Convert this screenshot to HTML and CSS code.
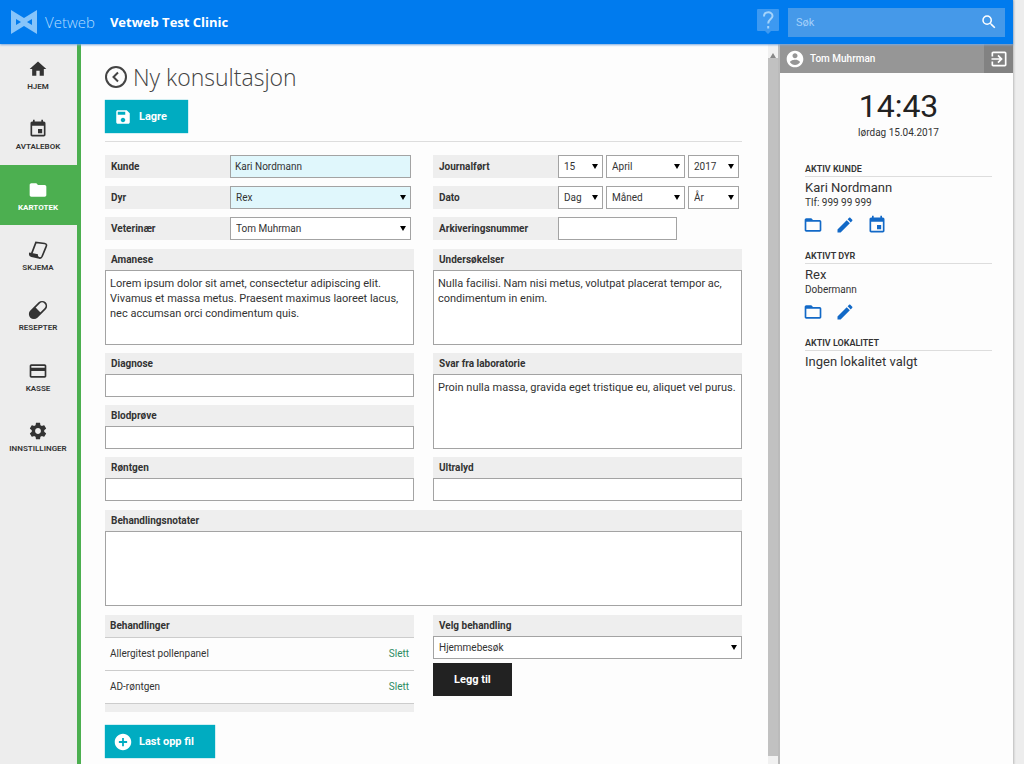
FILE: index.html
```html
<!DOCTYPE html>
<html lang="no">
<head>
<meta charset="utf-8">
<meta name="viewport" content="width=device-width, initial-scale=1">
<title>Vetweb – Ny konsultasjon</title>
<link rel="stylesheet" href="styles.css">
</head>
<body>
<svg class="sprite" aria-hidden="true">
  <symbol id="calendar" viewBox="0 0 24 24"><path d="M17 12h-5v5h5v-5zM16 1v2H8V1H6v2H5c-1.100 0-2 .9-2 2v14c0 1.100.9 2 2 2h14c1.100 0 2-.9 2-2V5c0-1.100-.9-2-2-2h-1V1h-2zm3 18H5V8h14v11z"/></symbol>
  <symbol id="folder-open" viewBox="0 0 24 24"><path d="M20 6h-8l-2-2H4c-1.100 0-2 .9-2 2v12c0 1.100.9 2 2 2h16c1.100 0 2-.9 2-2V8c0-1.100-.9-2-2-2zm0 12H4V8h16v10z"/></symbol>
  <symbol id="pencil" viewBox="0 0 24 24"><path d="M3 17.250V21h3.750L17.810 9.940l-3.750-3.750L3 17.250zM20.710 7.040c.39-.39.39-1.020 0-1.410l-2.340-2.340c-.39-.39-1.020-.39-1.410 0l-1.830 1.830 3.750 3.750 1.830-1.830z"/></symbol>
</svg>
<div class="app">
  <header class="topbar">
    <a class="brand" href="#">
      <svg class="brand-mark" viewBox="0 0 26 24" aria-hidden="true"><path fill-rule="evenodd" d="M0 0 13 8 26 0V24L13 16 0 24ZM5 9V15L10 12ZM21 9V15L16 12Z"/></svg>
      <span class="brand-name">Vetweb</span>
    </a>
    <strong class="clinic">Vetweb Test Clinic</strong>
    <button class="help" type="button" aria-label="Hjelp">
      <svg viewBox="0 0 22 26" aria-hidden="true"><path class="help-box" d="M1 0H21Q22 0 22 1V21Q22 22 21 22H14L11 25 8 22H1Q0 22 0 21V1Q0 0 1 0Z"/><path class="help-line" d="M7 7.500C7 2 15.500 2 15.500 7C15.500 10 11.200 10 11.200 14.500M11.200 17V19.500"/></svg>
    </button>
    <form class="search" role="search">
      <input type="search" placeholder="Søk" aria-label="Søk">
      <button type="button" aria-label="Søk"><svg viewBox="0 0 24 24" aria-hidden="true"><path d="M15.500 14h-.79l-.28-.27A6.470 6.470 0 0 0 16 9.500 6.500 6.500 0 1 0 9.500 16c1.610 0 3.090-.59 4.230-1.570l.27.28v.79l5 4.990L20.490 19l-4.990-5zm-6 0C7.010 14 5 11.990 5 9.500S7.010 5 9.500 5 14 7.010 14 9.500 11.990 14 9.500 14z"/></svg></button>
    </form>
  </header>
  <div class="body">
    <nav class="nav">
      <div class="nav-items">
      <a href="#"><svg viewBox="0 0 24 24"><path d="M10 20v-6h4v6h5v-8h3L12 3 2 12h3v8z"/></svg>HJEM</a>
      <a href="#"><svg viewBox="0 0 24 24"><use href="#calendar"/></svg>AVTALEBOK</a>
      <a class="active" href="#" aria-current="page"><svg viewBox="0 0 24 24"><path d="M10 4H4c-1.100 0-2 .9-2 2v12c0 1.100.9 2 2 2h16c1.100 0 2-.9 2-2V8c0-1.100-.9-2-2-2h-8l-2-2z"/></svg>KARTOTEK</a>
      <a href="#"><svg viewBox="0 0 24 24"><path class="line" d="M4.500 16 9.500 3 20 4.200C22.800 4.600 22.500 6.500 21.500 8.500L17 19.500C16.200 21.300 15 22 13.500 21.500"/><path d="M1.500 15 12 17C11.500 19 12.500 20.500 14.500 20.500L13.500 22.500 4 20.500C1.500 19.800 0.500 17.500 1.500 15Z"/></svg>SKJEMA</a>
      <a href="#"><svg viewBox="0 0 24 24"><g transform="rotate(-45 12 12)"><rect class="line" x="0" y="7" width="24" height="10" rx="5"/><path d="M0 12a5 5 0 0 1 5-5h7v10H5a5 5 0 0 1-5-5Z"/></g></svg>RESEPTER</a>
      <a href="#"><svg viewBox="0 0 24 24"><path d="M20 4H4c-1.110 0-1.990.89-1.990 2L2 18c0 1.110.89 2 2 2h16c1.110 0 2-.89 2-2V6c0-1.110-.89-2-2-2zm0 14H4v-6h16v6zm0-10H4V6h16v2z"/></svg>KASSE</a>
      <a href="#"><svg viewBox="0 0 24 24"><path d="M19.430 12.980c.04-.32.07-.64.07-.98s-.03-.66-.07-.98l2.110-1.650c.19-.15.24-.42.12-.64l-2-3.460c-.12-.22-.39-.3-.61-.22l-2.490 1c-.52-.4-1.080-.73-1.690-.98l-.38-2.650C14.460 2.180 14.250 2 14 2h-4c-.25 0-.46.18-.49.42l-.38 2.650c-.61.25-1.170.59-1.690.98l-2.490-1c-.23-.09-.49 0-.61.22l-2 3.460c-.13.22-.07.49.12.64l2.110 1.650c-.04.32-.07.65-.07.98s.03.66.07.98l-2.110 1.650c-.19.15-.24.42-.12.64l2 3.460c.12.22.39.3.61.22l2.490-1c.52.4 1.080.73 1.690.98l.38 2.650c.03.24.24.42.49.42h4c.25 0 .46-.18.49-.42l.38-2.650c.61-.25 1.170-.59 1.690-.98l2.490 1c.23.09.49 0 .61-.22l2-3.460c.12-.22.07-.49-.12-.64l-2.110-1.650zM12 15.500c-1.930 0-3.500-1.570-3.500-3.500s1.570-3.500 3.500-3.500 3.500 1.570 3.500 3.500-1.570 3.500-3.500 3.500z"/></svg>INNSTILLINGER</a>
      </div>
    </nav>
    <main class="main">
      <div class="title">
        <a href="#" aria-label="Tilbake"><svg viewBox="0 0 22 22"><circle cx="11" cy="11" r="10"/><path d="M13 6.500 8.500 11 13 15.500"/></svg></a>
        <h1>Ny konsultasjon</h1>
      </div>
      <form class="form">
        <div class="actions">
          <button class="btn" type="button"><svg viewBox="0 0 24 24"><path d="M17 3H5c-1.110 0-2 .9-2 2v14c0 1.100.89 2 2 2h14c1.100 0 2-.9 2-2V7l-4-4zm-5 16c-1.660 0-3-1.340-3-3s1.340-3 3-3 3 1.340 3 3-1.340 3-3 3zm3-10H5V5h10v4z"/></svg>Lagre</button>
        </div>
        <div class="columns">
          <div class="rows">
            <div class="row"><label for="kunde">Kunde</label><div class="controls"><input class="control filled" id="kunde" type="text" value="Kari Nordmann"></div></div>
            <div class="row"><label for="dyr">Dyr</label><div class="controls"><span class="pick"><select class="control filled" id="dyr"><option>Rex</option></select></span></div></div>
            <div class="row"><label for="vet">Veterinær</label><div class="controls"><span class="pick"><select class="control" id="vet"><option>Tom Muhrman</option></select></span></div></div>
          </div>
          <div class="rows">
            <div class="row"><label for="jdag">Journalført</label><div class="controls date">
              <span class="pick"><select class="control" id="jdag"><option>15</option></select></span>
              <span class="pick"><select class="control" aria-label="Journalført måned"><option>April</option></select></span>
              <span class="pick"><select class="control" aria-label="Journalført år"><option>2017</option></select></span></div></div>
            <div class="row"><label for="ddag">Dato</label><div class="controls date">
              <span class="pick"><select class="control" id="ddag"><option>Dag</option></select></span>
              <span class="pick"><select class="control" aria-label="Måned"><option>Måned</option></select></span>
              <span class="pick"><select class="control" aria-label="År"><option>År</option></select></span></div></div>
            <div class="row"><label for="arkiv">Arkiveringsnummer</label><div class="controls archive"><input class="control" id="arkiv" type="text"></div></div>
          </div>
        </div>
        <div class="columns">
          <div class="stack">
            <div class="field"><label for="amanese">Amanese</label><textarea class="control" id="amanese">Lorem ipsum dolor sit amet, consectetur adipiscing elit. Vivamus et massa metus. Praesent maximus laoreet lacus, nec accumsan orci condimentum quis.</textarea></div>
            <div class="field"><label for="diagnose">Diagnose</label><input class="control" id="diagnose" type="text"></div>
            <div class="field"><label for="blod">Blodprøve</label><input class="control" id="blod" type="text"></div>
            <div class="field"><label for="rontgen">Røntgen</label><input class="control" id="rontgen" type="text"></div>
          </div>
          <div class="stack">
            <div class="field"><label for="under">Undersøkelser</label><textarea class="control" id="under">Nulla facilisi. Nam nisi metus, volutpat placerat tempor ac, condimentum in enim.</textarea></div>
            <div class="field"><label for="svar">Svar fra laboratorie</label><textarea class="control" id="svar">Proin nulla massa, gravida eget tristique eu, aliquet vel purus.</textarea></div>
            <div class="field"><label for="ultra">Ultralyd</label><input class="control" id="ultra" type="text"></div>
          </div>
        </div>
        <div class="field"><label for="notater">Behandlingsnotater</label><textarea class="control" id="notater"></textarea></div>
        <div class="columns">
          <table class="treatments">
            <thead><tr><th colspan="2">Behandlinger</th></tr></thead>
            <tbody>
              <tr><td>Allergitest pollenpanel</td><td><a href="#">Slett</a></td></tr>
              <tr><td>AD-røntgen</td><td><a href="#">Slett</a></td></tr>
            </tbody>
            <tfoot><tr><td colspan="2"></td></tr></tfoot>
          </table>
          <div class="choose">
            <div class="field"><label for="velg">Velg behandling</label><span class="pick"><select class="control" id="velg"><option>Hjemmebesøk</option></select></span></div>
            <button class="btn dark" type="button">Legg til</button>
          </div>
        </div>
        <div class="upload">
          <button class="btn" type="button"><svg viewBox="0 0 24 24"><path d="M12 1C5.900 1 1 5.900 1 12s4.900 11 11 11 11-4.900 11-11S18.100 1 12 1zm5.500 12.200h-4.300v4.300h-2.400v-4.300H6.500v-2.400h4.300V6.500h2.400v4.300h4.300v2.400z"/></svg>Last opp fil</button>
        </div>
      </form>
    </main>
    <div class="scroll" aria-hidden="true"><div class="scroll-up"></div><div class="scroll-thumb"></div></div>
    <aside class="side">
      <div class="user">
        <svg viewBox="0 0 24 24"><path d="M12 2C6.480 2 2 6.480 2 12s4.480 10 10 10 10-4.480 10-10S17.520 2 12 2zm0 3c1.660 0 3 1.340 3 3s-1.340 3-3 3-3-1.340-3-3 1.340-3 3-3zm0 14.200c-2.500 0-4.710-1.280-6-3.220.03-1.990 4-3.080 6-3.080 1.990 0 5.970 1.090 6 3.080-1.290 1.940-3.500 3.220-6 3.220z"/></svg>
        <span>Tom Muhrman</span>
        <button type="button" aria-label="Logg ut"><svg viewBox="0 0 24 24"><path d="M10.090 15.590 11.500 17l5-5-5-5-1.410 1.410L12.670 11H3v2h9.670l-2.580 2.590zM19 3H5c-1.110 0-2 .9-2 2v4h2V5h14v14H5v-4H3v4c0 1.100.89 2 2 2h14c1.100 0 2-.9 2-2V5c0-1.100-.9-2-2-2z"/></svg></button>
      </div>
      <div class="clock"><time class="time">14:43</time><span>lørdag 15.04.2017</span></div>
      <div class="cards">
        <section class="card">
          <h2>AKTIV KUNDE</h2>
          <p class="name">Kari Nordmann</p><p class="detail">Tlf: 999 99 999</p>
          <div class="tools">
            <a href="#" aria-label="Åpne kunde"><svg viewBox="0 0 24 24"><use href="#folder-open"/></svg></a>
            <a href="#" aria-label="Rediger kunde"><svg viewBox="0 0 24 24"><use href="#pencil"/></svg></a>
            <a href="#" aria-label="Ny avtale"><svg viewBox="0 0 24 24"><use href="#calendar"/></svg></a>
          </div>
        </section>
        <section class="card">
          <h2>AKTIVT DYR</h2>
          <p class="name">Rex</p><p class="detail">Dobermann</p>
          <div class="tools">
            <a href="#" aria-label="Åpne dyr"><svg viewBox="0 0 24 24"><use href="#folder-open"/></svg></a>
            <a href="#" aria-label="Rediger dyr"><svg viewBox="0 0 24 24"><use href="#pencil"/></svg></a>
          </div>
        </section>
        <section class="card">
          <h2>AKTIV LOKALITET</h2>
          <p class="name">Ingen lokalitet valgt</p>
        </section>
      </div>
    </aside>
  </div>
</div>
</body>
</html>
```
FILE: styles.css
```css
* { box-sizing: border-box; }
body {
  margin: 0;
  padding-right: 11px;
  background: #ededed;
  color: #333;
  font: 10px/15px Roboto, "Liberation Sans", sans-serif;
  overflow: hidden;
}
h1, h2, p { margin: 0; font-weight: normal; }
a { color: inherit; text-decoration: none; }
button, input, select, textarea { font: inherit; color: inherit; border-radius: 0; }
button { border: 0; padding: 0; background: none; cursor: pointer; }
svg { display: block; fill: currentColor; flex: none; }
.sprite { display: none; }

.app {
  display: flex;
  flex-direction: column;
  height: 100vh;
  background: #fdfdfd;
  box-shadow: 0 0 2px 1px #bbb;
}

/* Top bar */
.topbar {
  display: flex;
  align-items: center;
  height: 44px;
  padding: 0 8px 0 11px;
  background: #007bee;
  color: #fff;
  box-shadow: 0 1px 2px #7aa8dd;
  position: relative;
  font-family: "Open Sans", sans-serif;
}
.brand { display: flex; align-items: center; gap: 8px; color: #86c4fa; }
.brand-mark { width: 26px; height: 24px; }
.brand-name { font-size: 15px; font-weight: 300; color: #b5dcff; }
.clinic { margin-left: 15px; font-size: 13px; font-weight: 700; }
.help { margin-left: auto; }
.help svg { width: 22px; height: 26px; }
.help-box { fill: #3d99f1; }
.help-line { fill: none; stroke: #a4d3fb; stroke-width: 2; }
.search {
  display: flex;
  align-items: center;
  width: 217px;
  height: 29px;
  margin-left: 9px;
  padding: 0 7px 0 8px;
  background: #4599e9;
  font: 11px/15px Roboto, sans-serif;
}
.search input { flex: 1; min-width: 0; border: 0; padding: 0; background: none; outline: 0; }
.search input::placeholder { color: #a4d0fa; opacity: 1; }
.search svg { width: 18px; height: 18px; }

.body { display: flex; flex: 1; min-height: 0; }

/* Navigation */
.nav {
  flex: none;
  width: 81px;
  border-right: 4px solid #4caf50;
  background: #ededed;
  font-size: 8px;
  font-weight: 600;
  line-height: 12px;
}
.nav-items { display: grid; grid-template-rows: repeat(7, 1fr); height: 423px; }
.nav a {
  display: flex;
  flex-direction: column;
  align-items: center;
  justify-content: center;
  gap: 2px;
  padding: 3px 1px 0 0;
}
.nav svg { width: 20px; height: 20px; }
.nav .line { fill: none; stroke: currentColor; stroke-width: 2; }
.nav .active { background: #4caf50; color: #fff; font-weight: 700; }

/* Main form */
.main { flex: 1; min-width: 0; padding: 20px 26px 0 24px; overflow: hidden; }
.title { display: flex; align-items: center; gap: 6px; height: 26px; color: #444; }
.title svg { width: 22px; height: 22px; fill: none; stroke: currentColor; stroke-width: 2; }
.title h1 { font: 300 23px/26px "Open Sans", sans-serif; }
.actions { padding: 10px 0 8px; border-bottom: 1px solid #ddd; margin-bottom: 4px; }
.form { display: flex; flex-direction: column; gap: 9px; }
.columns { display: grid; grid-template-columns: 1fr 1fr; gap: 19px; align-items: start; }
.rows, .stack { display: flex; flex-direction: column; gap: 8px; }

label, .treatments th { font-weight: 700; color: #333; }
.row { display: flex; height: 23px; background: linear-gradient(#eee, #eee) no-repeat; background-size: 125px 100%; }
.row label { flex: none; width: 125px; padding: 4px 6px; }
.controls { display: flex; gap: 3px; flex: 1; padding-right: 3px; }
.controls .pick { flex: 1; }
.controls.date .pick:nth-child(1) { flex: 45; }
.controls.date .pick:nth-child(2) { flex: 79; }
.controls.date .pick:nth-child(3) { flex: 51; }
.controls.archive { padding-right: 65px; }

.field { display: flex; flex-direction: column; }
.field label { height: 21px; padding: 3px 6px; background: #eee; }

.control {
  display: block;
  width: 100%;
  height: 23px;
  margin: 0;
  padding: 0 4px;
  border: 1px solid #a3a3a3;
  background: #fff;
}
.control.filled { background: #e0f7fc; }
textarea.control { height: 75px; padding: 5px 4px; font-size: 11px; resize: none; }
select.control { appearance: none; padding: 0 5px; }
.pick { position: relative; display: block; }
.pick::after {
  content: "";
  position: absolute;
  top: 9px;
  right: 5px;
  border: solid transparent;
  border-width: 5px 3px 0;
  border-top-color: #000;
  pointer-events: none;
}

.btn {
  display: inline-flex;
  align-items: center;
  gap: 7px;
  height: 33px;
  padding: 0 21px 0 9px;
  background: #00acc1;
  color: #fff;
  font-size: 11px;
  font-weight: 700;
  box-shadow: 0 0 1px #00acc1;
}
.btn svg { width: 18px; height: 18px; }
.btn.dark { padding: 0 21px; background: #222; box-shadow: none; }

.choose { display: flex; flex-direction: column; align-items: flex-start; gap: 4px; }
.choose .field { width: 100%; }

.treatments { width: 100%; border-collapse: collapse; }
.treatments th { height: 22px; padding: 0 5px; text-align: left; background: #eee; }
.treatments tr { border-bottom: 1px solid #ccc; }
.treatments td { height: 33px; padding: 0 5px; }
.treatments td:last-child { text-align: right; color: #2e8b62; }
.treatments tfoot tr { border: 0; }
.treatments tfoot td { height: 9px; padding: 0; background: #eee; }
.upload { padding-top: 4px; }

/* Scroll track */
.scroll { display: flex; flex-direction: column; flex: none; width: 10px; padding-bottom: 8px; background: #f1f1f1; }
.scroll-up { height: 14px; border: solid transparent; border-width: 5px 3px; border-bottom-color: #888; width: 6px; margin: 0 2px; }
.scroll-thumb { flex: 1; background: #c1c1c1; }

/* Side panel */
.side { flex: none; width: 235px; border-left: 2px solid #bbb; }
.user { display: flex; align-items: center; height: 29px; background: #969696; color: #fff; font-weight: 500; }
.user svg { width: 20px; height: 20px; margin-left: 5px; }
.user span { flex: 1; padding-left: 5px; }
.user button { width: 29px; height: 29px; background: #828282; }
.clock { display: flex; flex-direction: column; align-items: center; padding: 14px 0 0 4px; }
.time { font-size: 32px; line-height: 38px; color: #222; }
.cards { display: flex; flex-direction: column; gap: 14px; padding: 22px 21px 0 25px; }
.card h2 { border-bottom: 1px solid #ddd; font-size: 9px; font-weight: 600; line-height: 14px; }
.name { font-size: 13px; line-height: 16px; padding-top: 3px; }
.detail { line-height: 13px; }
.tools { display: flex; gap: 14px; padding: 6px 0 0; color: #1269c7; }
.tools svg { width: 20px; height: 20px; margin-left: -2px; }
```
